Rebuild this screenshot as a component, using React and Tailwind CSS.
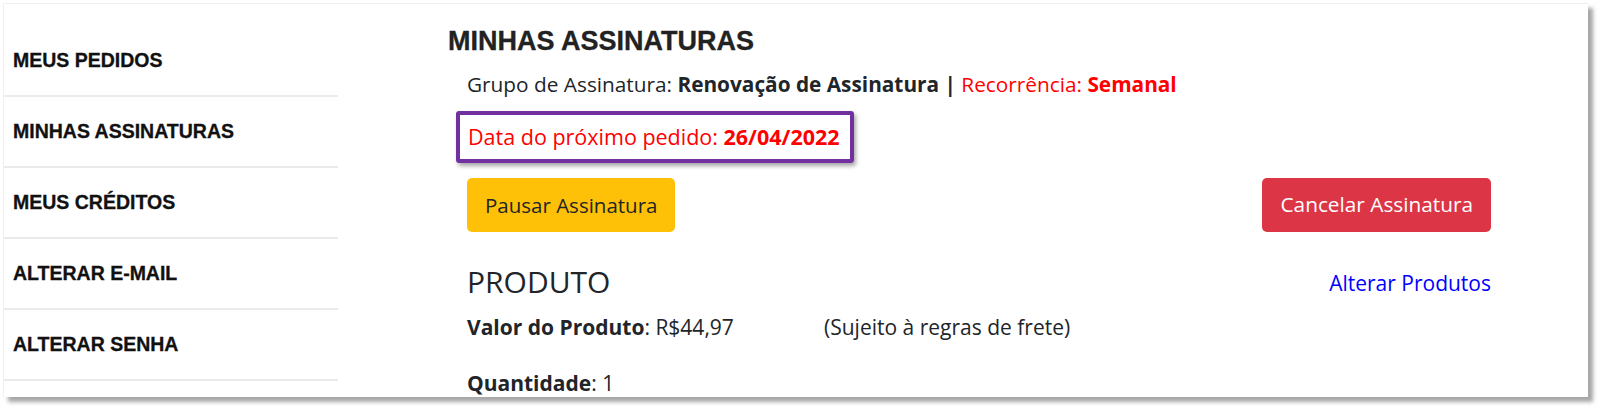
import React from "react";

const body = { fontFamily: '"Open Sans", "Noto Sans", sans-serif' };
const title = { fontFamily: '"Liberation Sans", Arial, sans-serif' };

function SideItem({ label }) {
  return (
    <div
      className="h-[71px] flex items-center pl-[9px] border-b-2 border-[#ebebeb] text-[19.5px] font-bold text-[#111] [-webkit-text-stroke:0.3px_#111]"
      style={title}
    >
      {label}
    </div>
  );
}

export default function App() {
  return (
    <div className="w-[1600px] h-[409px] bg-white relative overflow-hidden">
      <div className="ml-[3px] mt-[3px] w-[1585px] h-[394px] bg-white border-t border-l border-[#f0f0f0] shadow-[5px_5px_4px_rgba(0,0,0,0.35)] overflow-hidden flex">
        <div className="w-[334px] shrink-0 pt-[22px]">
          <SideItem label="MEUS PEDIDOS" />
          <SideItem label="MINHAS ASSINATURAS" />
          <SideItem label="MEUS CRÉDITOS" />
          <SideItem label="ALTERAR E-MAIL" />
          <SideItem label="ALTERAR SENHA" />
        </div>
        <div className="ml-[110px] pt-[21px]">
          <h1 className="text-[27px] leading-[32px] font-bold text-[#222] [-webkit-text-stroke:0.3px_#222]" style={title}>
            MINHAS ASSINATURAS
          </h1>
          <div className="pl-[19px] w-[1043px] text-[21px] text-[#212529]" style={body}>
            <p className="mt-[13px] leading-[28px] text-[20.8px]">
              Grupo de Assinatura: <b>Renovação de Assinatura |</b>{" "}
              <span className="text-[#ff0000]">
                Recorrência: <b>Semanal</b>
              </span>
            </p>
            <div className="mt-[13px] -ml-[11px] w-fit border-4 border-[#7030a0] rounded-[3px] pl-[8px] pr-[10px] py-[8px] shadow-[2px_3px_4px_rgba(0,0,0,0.35)]">
              <p className="leading-[28px] text-[#ff0000] text-[21.5px]">
                Data do próximo pedido: <b>26/04/2022</b>
              </p>
            </div>
            <div className="mt-[15px] flex justify-between">
              <button className="h-[54px] px-[18px] rounded-[5px] bg-[#ffc107] text-[#212529] text-[20.5px]">
                Pausar Assinatura
              </button>
              <button className="h-[54px] px-[18px] rounded-[5px] bg-[#dc3545] text-white text-[20.8px]">
                Cancelar Assinatura
              </button>
            </div>
            <div className="mt-[32px] flex justify-between items-center h-[36px]">
              <h2 className="text-[30px] leading-[36px] text-[#212529]">PRODUTO</h2>
              <a className="text-[#0000ff] leading-[28px] mt-[2px]">Alterar Produtos</a>
            </div>
            <div className="mt-[13px] flex leading-[28px]">
              <span className="w-[357px]">
                <b>Valor do Produto</b>: R$44,97
              </span>
              <span>(Sujeito à regras de frete)</span>
            </div>
            <p className="mt-[28px] leading-[28px]">
              <b>Quantidade</b>: 1
            </p>
          </div>
        </div>
      </div>
    </div>
  );
}
